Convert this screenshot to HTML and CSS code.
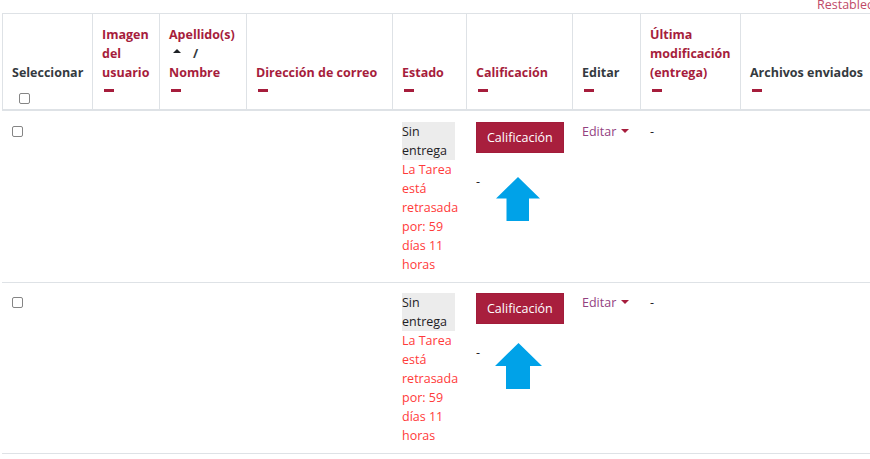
FILE: index.html
```html
<!DOCTYPE html>
<html lang="es">
<head>
<meta charset="utf-8">
<title>Calificaciones</title>
<link rel="stylesheet" href="styles.css">
</head>
<body>
<div class="page">
  <div class="reset"><a href="#" class="reset-link">Restablecer preferencias de la tabla</a></div>
  <table class="grading">
    <colgroup>
      <col class="c-sel"><col class="c-img"><col class="c-name"><col class="c-mail"><col class="c-state"><col class="c-grade"><col class="c-edit"><col class="c-mod"><col class="c-files">
    </colgroup>
    <thead>
      <tr>
        <th class="plain"><div>Seleccionar</div><div class="icon-line"><input type="checkbox" class="cb cb-head"></div></th>
        <th><a href="#" class="hlink">Imagen<br>del<br>usuario</a><div class="icon-line"><span class="hide-dash"></span></div></th>
        <th><a href="#" class="hlink">Apellido(s)</a><br><span class="sort-caret"></span><span class="slash">/</span><br><a href="#" class="hlink">Nombre</a><div class="icon-line"><span class="hide-dash"></span></div></th>
        <th><a href="#" class="hlink">Dirección de correo</a><div class="icon-line"><span class="hide-dash"></span></div></th>
        <th><a href="#" class="hlink">Estado</a><div class="icon-line"><span class="hide-dash"></span></div></th>
        <th><a href="#" class="hlink">Calificación</a><div class="icon-line"><span class="hide-dash"></span></div></th>
        <th class="plain">Editar<div class="icon-line"><span class="hide-dash"></span></div></th>
        <th><a href="#" class="hlink">Última<br>modificación<br>(entrega)</a><div class="icon-line"><span class="hide-dash"></span></div></th>
        <th class="plain">Archivos enviados<div class="icon-line"><span class="hide-dash"></span></div></th>
      </tr>
    </thead>
    <tbody>
      <tr>
        <td><input type="checkbox" class="cb"></td>
        <td></td>
        <td></td>
        <td></td>
        <td class="nowrap"><span class="status">Sin<br>entrega</span><div class="late">La Tarea<br>está<br>retrasada<br>por: 59<br>días 11<br>horas</div></td>
        <td>
          <div class="grade-cell">
            <a href="#" class="btn">Calificación</a>
            <div class="grade-dash">-</div>
            <svg class="arrow arrow-1" width="44" height="44" viewBox="0 0 44 44"><path d="M22 0 L44 21.5 L33 21.5 L33 44 L10.5 44 L10.5 21.5 L0 21.5 Z" fill="#00a2e8"/></svg>
          </div>
        </td>
        <td><a href="#" class="edit-link">Editar<span class="dd-caret"></span></a></td>
        <td>-</td>
        <td></td>
      </tr>
      <tr>
        <td><input type="checkbox" class="cb"></td>
        <td></td>
        <td></td>
        <td></td>
        <td class="nowrap"><span class="status">Sin<br>entrega</span><div class="late">La Tarea<br>está<br>retrasada<br>por: 59<br>días 11<br>horas</div></td>
        <td>
          <div class="grade-cell">
            <a href="#" class="btn">Calificación</a>
            <div class="grade-dash">-</div>
            <svg class="arrow arrow-2" width="47" height="46" viewBox="0 0 47 46"><path d="M23.5 0 L47 23 L35 23 L35 46 L11 46 L11 23 L0 23 Z" fill="#00a2e8"/></svg>
          </div>
        </td>
        <td><a href="#" class="edit-link">Editar<span class="dd-caret"></span></a></td>
        <td>-</td>
        <td></td>
      </tr>
    </tbody>
  </table>
</div>
</body>
</html>
```
FILE: styles.css
```css
html, body {
  margin: 0;
  padding: 0;
  background: #ffffff;
}
body {
  font-family: "Open Sans", "Liberation Sans", sans-serif;
  font-size: 12.5px;
  line-height: 19px;
  color: #1d2125;
  width: 870px;
  height: 459px;
  overflow: hidden;
}
a { text-decoration: none; }

.page {
  width: 1100px;
  padding-left: 2px;
}

.reset {
  height: 13px;
  line-height: 9px;
  padding-left: 815px;
  white-space: nowrap;
}
.reset-link { color: #bf4a68; }

.grading {
  border-collapse: separate;
  border-spacing: 0;
  table-layout: fixed;
  width: 988px;
}
.c-sel { width: 90px; }
.c-img { width: 67px; }
.c-name { width: 87px; }
.c-mail { width: 146px; }
.c-state { width: 74px; }
.c-grade { width: 106px; }
.c-edit { width: 68px; }
.c-mod { width: 100px; }
.c-files { width: 250px; }

.grading th {
  border-top: 1px solid #dee2e6;
  border-left: 1px solid #dee2e6;
  border-bottom: 2px solid #dee2e6;
  padding: 11px 9px 8px;
  vertical-align: bottom;
  text-align: left;
  font-weight: 700;
  white-space: nowrap;
  color: #343a40;
}
.hlink { color: #a61d3c; }

.icon-line {
  height: 19px;
  padding-top: 7px;
  box-sizing: border-box;
}
.hide-dash {
  display: block;
  width: 10px;
  height: 3px;
  margin-left: 2px;
  background: #a61d3c;
}

.sort-caret {
  display: inline-block;
  width: 0;
  height: 0;
  margin-left: 4px;
  border-left: 4px solid transparent;
  border-right: 4px solid transparent;
  border-bottom: 4px solid #1d2125;
  vertical-align: 5px;
}
.slash {
  margin-left: 12px;
  color: #343a40;
}

.cb {
  -webkit-appearance: none;
  appearance: none;
  display: block;
  box-sizing: border-box;
  width: 11px;
  height: 11px;
  margin: 4px 0 0 0;
  border: 1px solid #858585;
  border-radius: 2px;
  background: #fff;
}
.cb-head { margin: 4px 0 0 7px; }

.grading td {
  padding: 10px 10px 8px;
  vertical-align: top;
  border-bottom: 1px solid #dee2e6;
}
.grading tbody tr:first-child td { padding-top: 11px; }

.nowrap { white-space: nowrap; }
.status {
  display: inline-block;
  vertical-align: top;
  min-width: 53px;
  background: #ececec;
  color: #1d2125;
}
.late { color: #ff3a3a; }

.grade-cell { position: relative; }
.btn {
  display: inline-block;
  background: #a81f3d;
  border: 1px solid #a21c3a;
  color: #ffffff;
  padding: 5px 10px;
  line-height: 19px;
  white-space: nowrap;
}
.grade-dash { margin-top: 19px; }
.arrow { position: absolute; }
.arrow-1 { left: 20px; top: 55px; }
.arrow-2 { left: 19px; top: 50px; }

.edit-link { color: #93417f; white-space: nowrap; }
.dd-caret {
  display: inline-block;
  width: 0;
  height: 0;
  margin-left: 5px;
  border-top: 4px solid #a61d3c;
  border-left: 4px solid transparent;
  border-right: 4px solid transparent;
  vertical-align: 3px;
}
```
